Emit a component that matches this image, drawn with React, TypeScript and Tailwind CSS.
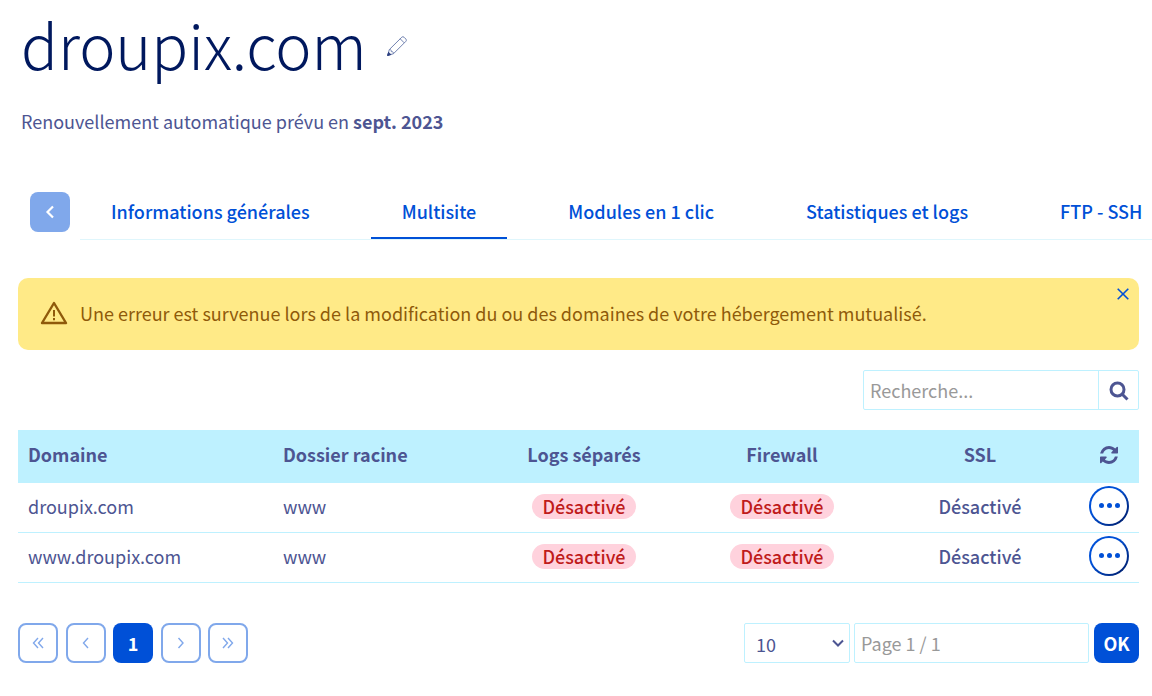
const tabs = ['Informations générales', 'Multisite', 'Modules en 1 clic', 'Statistiques et logs', 'FTP - SSH']

const rows = [
  { domain: 'droupix.com', root: 'www' },
  { domain: 'www.droupix.com', root: 'www' },
]

function Badge({ children }: { children: string }) {
  return (
    <span className="inline-block rounded-full bg-[#ffd2dd] px-2.5 leading-[25px] font-medium text-[#bf1b1b]">
      {children}
    </span>
  )
}

function Pencil() {
  return (
    <svg width="20" height="20" viewBox="0 0 20 20" fill="none" stroke="#7182b0" strokeWidth="1">
      <path d="M2.3 13.6 14.8 1.2a1.6 1.6 0 0 1 2.2 0l1.9 1.9a1.6 1.6 0 0 1 0 2.2L6.5 17.7.7 19.4z" />
      <path d="M2.3 13.6c1.4-.3 2 .3 2 2 1.6 0 2.3.6 2.2 2.1M13.2 2.8l4 4" />
      <path d="M1.6 16.3.5 19.6l3.3-1z" fill="#2c3f80" stroke="#2c3f80" />
    </svg>
  )
}

function Refresh() {
  return (
    <svg width="18" height="18" viewBox="0 0 1536 1536" fill="currentColor">
      <path d="M1511 928q0 5-1 7-64 268-268 434.500T764 1536q-146 0-282.500-55T238 1324l-129 129q-19 19-45 19t-45-19-19-45V960q0-26 19-45t45-19h448q26 0 45 19t19 45-19 45l-137 137q71 66 161 102t187 36q134 0 250-65t186-179q11-17 53-117 8-23 30-23h192q13 0 22.500 9.500t9.500 22.500zm25-800v448q0 26-19 45t-45 19h-448q-26 0-45-19t-19-45 19-45l138-138Q969 256 768 256q-134 0-250 65T332 500q-11 17-53 117-8 23-30 23H50q-13 0-22.500-9.500T18 608v-7q65-268 270-434.500T768 0q146 0 284 55.500T1297 212l130-129q19-19 45-19t45 19 19 45z" />
    </svg>
  )
}

function PageButton({ label, d }: { label: string; d: string }) {
  return (
    <button type="button" aria-label={label} className="flex size-10 items-center justify-center rounded-lg border-2 border-[#80a8eb] text-[#80a8eb]">
      <svg width="14" height="14" viewBox="0 0 14 14" fill="none" stroke="currentColor" strokeWidth="1.4">
        <path d={d} />
      </svg>
    </button>
  )
}

export default function App() {
  return (
    <main className="overflow-hidden bg-white pb-8 font-['Noto_Sans_CJK_SC',sans-serif] text-[18px] leading-6 text-[#4d5592]">
      <header className="px-[21px] pt-3">
        <div className="flex items-center gap-5">
          <h1 className="text-[61px] leading-[64px] font-light text-[#00185e]">droupix.com</h1>
          <button type="button" aria-label="Modifier" className="pt-1">
            <Pencil />
          </button>
        </div>
        <p className="mt-[33px]">
          Renouvellement automatique prévu en <strong className="font-bold">sept. 2023</strong>
        </p>
      </header>

      <nav className="mt-[59px] flex pl-[30px]">
        <button type="button" aria-label="Précédent" className="mr-2.5 flex size-10 shrink-0 items-center justify-center rounded-lg bg-[#80a8eb] text-white">
          <svg width="12" height="14" viewBox="0 0 12 14" fill="none" stroke="currentColor" strokeWidth="2.2">
            <path d="M9 1.5 3.5 7 9 12.5" />
          </svg>
        </button>
        <ul className="flex h-12 flex-1 gap-[30px] border-b border-[#dff6fc] whitespace-nowrap">
          {tabs.map((tab) => (
            <li key={tab}>
              <a
                href="#"
                aria-current={tab === 'Multisite' ? 'page' : undefined}
                className="block h-[47px] border-b-2 border-transparent px-[31px] leading-[38px] font-medium text-[#0050d7] aria-[current=page]:border-[#0050d7]"
              >
                {tab}
              </a>
            </li>
          ))}
        </ul>
      </nav>

      <div className="pr-[13px] pl-[18px]">
        <div role="alert" className="relative mt-[38px] flex h-[72px] items-center gap-3 rounded-[10px] bg-[#ffea87] pb-0.5 pl-[22px] text-[#8f5a0a]">
          <svg width="28" height="24" viewBox="0 0 28 24" fill="none" stroke="currentColor" strokeWidth="2.4" strokeLinejoin="round">
            <path d="M14 2 26 22H2z" />
            <path d="M14 9v6.5M14 17v2.2" strokeWidth="2" />
          </svg>
          <p>Une erreur est survenue lors de la modification du ou des domaines de votre hébergement mutualisé.</p>
          <button type="button" aria-label="Fermer" className="absolute top-2.5 right-2.5 text-[#0050d7]">
            <svg width="12" height="12" viewBox="0 0 12 12" fill="none" stroke="currentColor" strokeWidth="1.6">
              <path d="m.7.7 10.6 10.6M11.3.7.7 11.3" />
            </svg>
          </button>
        </div>

        <form className="mt-5 ml-auto flex h-10 w-[276px] rounded-xs border border-[#bef1ff]">
          <input type="text" aria-label="Recherche" placeholder="Recherche..." className="min-w-0 flex-1 px-1.5 outline-none placeholder:text-[#999999]" />
          <button type="button" aria-label="Rechercher" className="flex w-10 items-center justify-center border-l border-[#bef1ff] pt-0.5">
            <svg width="20" height="20" viewBox="0 0 20 20" fill="none" stroke="currentColor" strokeWidth="3">
              <circle cx="8.5" cy="8.5" r="6.5" />
              <path d="m13 13 5.5 5.5" />
            </svg>
          </button>
        </form>

        <table className="mt-5 w-full table-fixed border-separate border-spacing-0">
          <thead className="bg-[#bef1ff]">
            <tr className="h-[53px] *:pb-1.5">
              <th className="w-[255px] px-2.5 text-left">Domaine</th>
              <th className="w-[212px] px-2.5 text-left">Dossier racine</th>
              <th className="w-[198px]">Logs séparés</th>
              <th className="w-[198px]">Firewall</th>
              <th className="w-[198px]">SSL</th>
              <th className="w-[60px]">
                <button type="button" aria-label="Rafraîchir" className="mx-auto block pt-0.5">
                  <Refresh />
                </button>
              </th>
            </tr>
          </thead>
          <tbody>
            {rows.map((row) => (
              <tr key={row.domain} className="h-[50px] text-center *:border-b *:border-[#bef1ff] *:pb-1">
                <td className="px-2.5 text-left">{row.domain}</td>
                <td className="px-2.5 text-left">{row.root}</td>
                <td className="pt-0.5">
                  <Badge>Désactivé</Badge>
                </td>
                <td className="pt-0.5">
                  <Badge>Désactivé</Badge>
                </td>
                <td className="font-medium">Désactivé</td>
                <td>
                  <button type="button" aria-label="Actions" className="mx-auto block size-10 rounded-full bg-linear-to-br from-[#0050d7] from-40% to-[#00185e] p-0.5">
                    <span className="flex size-full items-center justify-center gap-[3px] rounded-full bg-white">
                      <i className="size-[5px] rounded-full bg-[#0050d7]" />
                      <i className="size-[5px] rounded-full bg-[#0050d7]" />
                      <i className="size-[5px] rounded-full bg-[#0050d7]" />
                    </span>
                  </button>
                </td>
              </tr>
            ))}
          </tbody>
        </table>

        <div className="mt-10 flex justify-between">
          <div className="flex w-[230px] justify-between">
            <PageButton label="Première page" d="M7 2 2.5 7 7 12M12 2 7.5 7 12 12" />
            <PageButton label="Page précédente" d="M9 2 4.5 7 9 12" />
            <button type="button" aria-current="page" className="size-10 rounded-lg bg-[#0050d7] font-bold text-white">
              1
            </button>
            <PageButton label="Page suivante" d="M4.5 2 9 7 4.5 12" />
            <PageButton label="Dernière page" d="M2 2 6.500 7 2 12M7 2 11.500 7 7 12" />
          </div>
          <form className="flex h-10">
            <div className="relative mr-1">
              <select aria-label="Résultats par page" className="h-10 w-[106px] appearance-none rounded-xs border border-[#bef1ff] bg-white pt-0.5 pl-[11px]">
                <option>10</option>
              </select>
              <svg className="pointer-events-none absolute top-4 right-1.5" width="12" height="9" viewBox="0 0 12 9" fill="none" stroke="currentColor" strokeWidth="2">
                <path d="m1 1.5 5 5 5-5" />
              </svg>
            </div>
            <input type="text" aria-label="Page" placeholder="Page 1 / 1" className="w-[235px] rounded-xs border border-[#bef1ff] px-1.5 outline-none placeholder:text-[#999999]" />
            <button type="button" className="ml-[5px] w-[45px] rounded-lg bg-[#0050d7] font-bold text-white">
              OK
            </button>
          </form>
        </div>
      </div>
    </main>
  )
}
